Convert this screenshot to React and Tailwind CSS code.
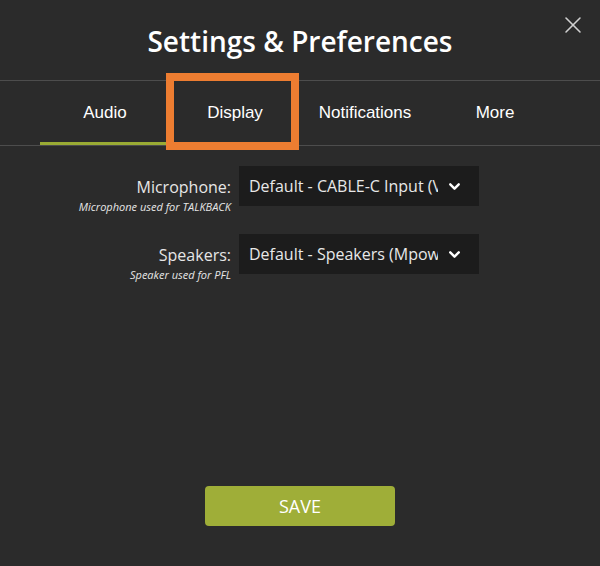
import { ChevronDown, X } from "lucide-react";

const fields = [
  { label: "Microphone:", hint: "Microphone used for TALKBACK", value: "Default - CABLE-C Input (VB-Audio Cable C)" },
  { label: "Speakers:", hint: "Speaker used for PFL", value: "Default - Speakers (Mpow HC6)" },
];

const tabs = ["Audio", "Display", "Notifications", "More"];

export default function App() {
  return (
    <div className="relative w-[600px] h-[566px] bg-[#2b2b2b] flex flex-col text-white font-['Open_Sans',sans-serif]">
      {/* Header */}
      <div className="h-[81px] flex items-center justify-center border-b border-[#4d4d4d]">
        <h1 className="text-[28px] font-semibold pt-[2px]">Settings &amp; Preferences</h1>
      </div>
      <button className="absolute left-[559px] top-[11px] text-[#d0d0d0]">
        <X size={28} strokeWidth={1.3} />
      </button>

      {/* Tabs */}
      <div className="flex px-[40px] border-b border-[#4d4d4d] font-['Liberation_Sans',sans-serif] text-[17px]">
        {tabs.map((tab, i) => (
          <div
            key={tab}
            className={`w-[130px] h-[64px] flex items-center justify-center ${
              i === 0 ? "border-b-[3px] border-[#9aab34] pt-[3px]" : ""
            }`}
          >
            {tab}
          </div>
        ))}
      </div>

      {/* Annotation box */}
      <div className="absolute left-[166px] top-[73px] w-[133px] h-[77px] border-[8px] border-[#ed7d31]"></div>

      {/* Fields */}
      <div className="flex flex-col gap-[28px] pt-[20px]">
        {fields.map((f) => (
          <div key={f.label} className="flex items-start h-[40px]">
            <div className="w-[231px] text-right pt-[10px]">
              <div className="text-[16px] leading-[22px] text-[#e6e6e6]">{f.label}</div>
              <div className="mt-[2px] text-[11px] italic leading-[14px] text-[#e6e6e6]">{f.hint}</div>
            </div>
            <div className="ml-[8px] w-[240px] h-[40px] bg-[#1c1c1c] flex items-center pl-[10px] pr-[16px]">
              <span className="flex-1 overflow-hidden whitespace-nowrap text-[16px] text-[#e8e8e8]">
                {f.value}
              </span>
              <ChevronDown size={17} strokeWidth={3.4} className="ml-[8px] shrink-0" />
            </div>
          </div>
        ))}
      </div>

      {/* Save */}
      <div className="mt-auto mb-[40px] flex justify-center">
        <button className="w-[190px] h-[40px] rounded-[4px] bg-[#9fae38] text-[18px] text-white">
          SAVE
        </button>
      </div>
    </div>
  );
}
